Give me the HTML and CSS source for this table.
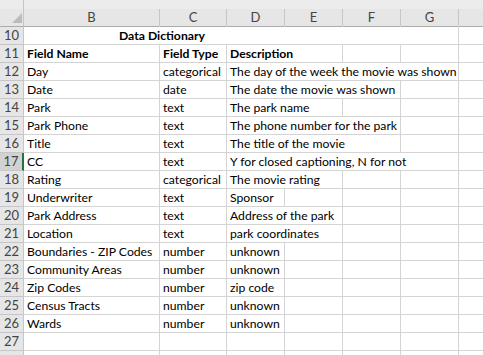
FILE: index.html
```html
<!DOCTYPE html>
<html>
<head>
<meta charset="utf-8">
<link rel="stylesheet" href="styles.css">
</head>
<body>
<div class="sheet">
  <div class="corner"><span class="tri"></span></div>
  <div class="colhead">B</div>
  <div class="colhead">C</div>
  <div class="colhead">D</div>
  <div class="colhead">E</div>
  <div class="colhead">F</div>
  <div class="colhead">G</div>
  <div class="colhead last"></div>

  <div class="rowhead">10</div>
  <div class="cell title span6">Data Dictionary</div>
  <div class="cell"></div>

  <div class="rowhead">11</div>
  <div class="cell bold">Field Name</div>
  <div class="cell bold">Field Type</div>
  <div class="cell bold span2">Description</div>
  <div class="cell"></div><div class="cell"></div><div class="cell"></div>

  <div class="rowhead">12</div>
  <div class="cell">Day</div>
  <div class="cell">categorical</div>
  <div class="cell span4">The day of the week the movie was shown</div>
  <div class="cell"></div>

  <div class="rowhead">13</div>
  <div class="cell">Date</div>
  <div class="cell">date</div>
  <div class="cell span3">The date the movie was shown</div>
  <div class="cell"></div><div class="cell"></div>

  <div class="rowhead">14</div>
  <div class="cell">Park</div>
  <div class="cell">text</div>
  <div class="cell span2">The park name</div>
  <div class="cell"></div><div class="cell"></div><div class="cell"></div>

  <div class="rowhead">15</div>
  <div class="cell">Park Phone</div>
  <div class="cell">text</div>
  <div class="cell span3">The phone number for the park</div>
  <div class="cell"></div><div class="cell"></div>

  <div class="rowhead">16</div>
  <div class="cell">Title</div>
  <div class="cell">text</div>
  <div class="cell span3">The title of the movie</div>
  <div class="cell"></div><div class="cell"></div>

  <div class="rowhead active">17</div>
  <div class="cell">CC</div>
  <div class="cell">text</div>
  <div class="cell span4">Y for closed captioning, N for not</div>
  <div class="cell"></div>

  <div class="rowhead">18</div>
  <div class="cell">Rating</div>
  <div class="cell">categorical</div>
  <div class="cell span2">The movie rating</div>
  <div class="cell"></div><div class="cell"></div><div class="cell"></div>

  <div class="rowhead">19</div>
  <div class="cell">Underwriter</div>
  <div class="cell">text</div>
  <div class="cell">Sponsor</div>
  <div class="cell"></div><div class="cell"></div><div class="cell"></div><div class="cell"></div>

  <div class="rowhead">20</div>
  <div class="cell">Park Address</div>
  <div class="cell">text</div>
  <div class="cell span2">Address of the park</div>
  <div class="cell"></div><div class="cell"></div><div class="cell"></div>

  <div class="rowhead">21</div>
  <div class="cell">Location</div>
  <div class="cell">text</div>
  <div class="cell span2">park coordinates</div>
  <div class="cell"></div><div class="cell"></div><div class="cell"></div>

  <div class="rowhead">22</div>
  <div class="cell">Boundaries - ZIP Codes</div>
  <div class="cell">number</div>
  <div class="cell">unknown</div>
  <div class="cell"></div><div class="cell"></div><div class="cell"></div><div class="cell"></div>

  <div class="rowhead">23</div>
  <div class="cell">Community Areas</div>
  <div class="cell">number</div>
  <div class="cell">unknown</div>
  <div class="cell"></div><div class="cell"></div><div class="cell"></div><div class="cell"></div>

  <div class="rowhead">24</div>
  <div class="cell">Zip Codes</div>
  <div class="cell">number</div>
  <div class="cell">zip code</div>
  <div class="cell"></div><div class="cell"></div><div class="cell"></div><div class="cell"></div>

  <div class="rowhead">25</div>
  <div class="cell">Census Tracts</div>
  <div class="cell">number</div>
  <div class="cell">unknown</div>
  <div class="cell"></div><div class="cell"></div><div class="cell"></div><div class="cell"></div>

  <div class="rowhead">26</div>
  <div class="cell">Wards</div>
  <div class="cell">number</div>
  <div class="cell">unknown</div>
  <div class="cell"></div><div class="cell"></div><div class="cell"></div><div class="cell"></div>

  <div class="rowhead">27</div>
  <div class="cell"></div><div class="cell"></div><div class="cell"></div><div class="cell"></div><div class="cell"></div><div class="cell"></div><div class="cell"></div>

  <div class="rowhead"></div>
  <div class="cell"></div><div class="cell"></div><div class="cell"></div><div class="cell"></div><div class="cell"></div><div class="cell"></div><div class="cell"></div>
</div>
</body>
</html>
```

FILE: styles.css
```css
html, body {
  margin: 0;
  padding: 0;
  background: #ffffff;
  overflow: hidden;
}

.sheet {
  display: grid;
  grid-template-columns: 24px 136px 67px 58px 58px 58px 58px 40px;
  grid-auto-rows: 18px;
  grid-template-rows: 27px;
  width: 499px;
  font-family: Lato, "Open Sans", sans-serif;
  font-size: 12.2px;
  color: #000;
}

.corner,
.colhead {
  border-bottom: 1px solid #ababab;
  box-sizing: border-box;
  position: relative;
}

.corner {
  border-right: 1px solid #c6c6c6;
  background: linear-gradient(#ececec 0 9px, #e6e6e6 9px);
}

.tri {
  position: absolute;
  right: 1px;
  bottom: 3px;
  width: 0;
  height: 0;
  border-left: 10px solid transparent;
  border-bottom: 10px solid #bcbcbc;
}

.colhead {
  background: linear-gradient(#ececec 0 9px, #e6e6e6 9px);
  color: #444;
  text-align: center;
  line-height: 16px;
  padding-top: 9px;
  font-size: 13px;
  border-right: 1px solid transparent;
}

.colhead::after {
  content: "";
  position: absolute;
  right: -1px;
  top: 9px;
  bottom: 0;
  width: 1px;
  background: #c6c6c6;
}

.colhead.last::after {
  display: none;
}

.rowhead {
  background: #e6e6e6;
  color: #444;
  border-right: 1px solid #c6c6c6;
  border-bottom: 1px solid #c6c6c6;
  box-sizing: border-box;
  text-align: center;
  line-height: 17px;
  font-size: 13px;
}

.rowhead.active {
  background: #d2d2d2;
  border-right: 2px solid #217346;
}

.cell {
  border-right: 1px solid #d4d4d4;
  border-bottom: 1px solid #d4d4d4;
  box-sizing: border-box;
  padding-left: 3px;
  line-height: 17px;
  white-space: nowrap;
  overflow: visible;
}

.bold {
  font-weight: bold;
}

.title {
  font-weight: bold;
  padding-left: 95px;
}

.span2 { grid-column: span 2; }
.span3 { grid-column: span 3; }
.span4 { grid-column: span 4; }
.span6 { grid-column: span 6; }
```
